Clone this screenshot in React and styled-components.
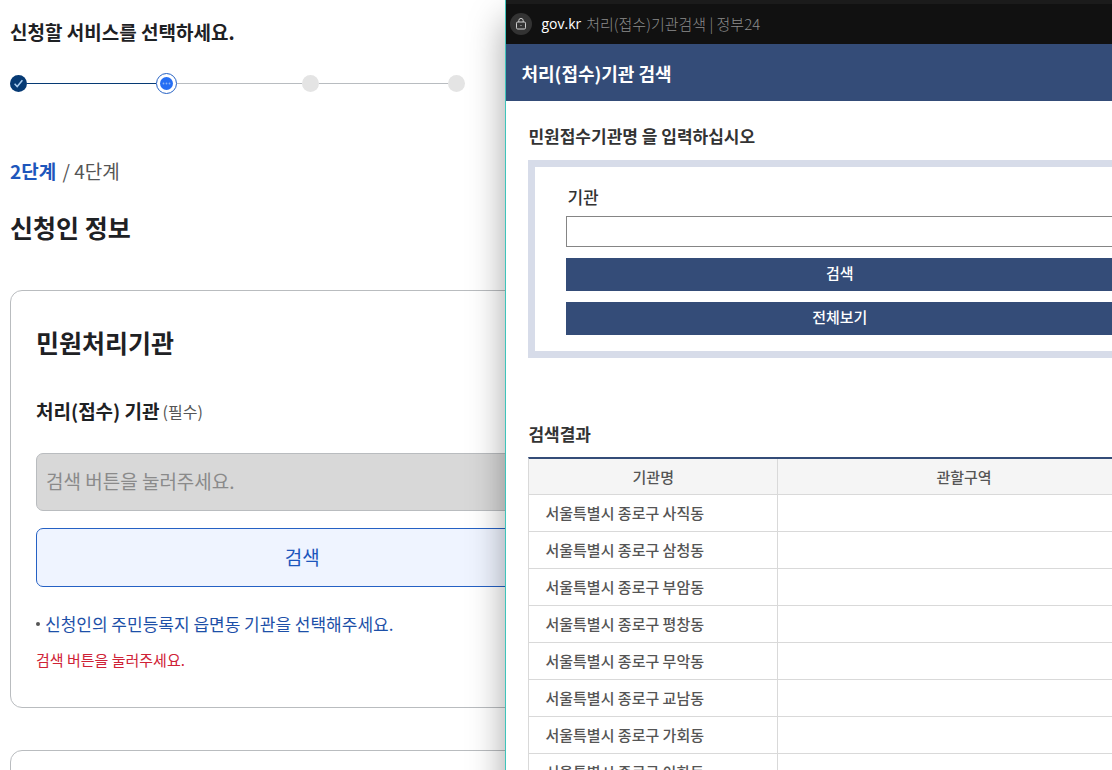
import React from "react";
import styled, { createGlobalStyle, css } from "styled-components";

const GlobalStyle = createGlobalStyle`
  *, *::before, *::after { box-sizing: border-box; }
  body {
    margin: 0;
    background: #fff;
    color: #1e2124;
    font-family: "Noto Sans CJK KR", "Noto Sans", sans-serif;
  }
  h1, h2, h3, p, ol, ul { margin: 0; padding: 0; }
  ol, ul { list-style: none; }
  button, input { font-family: inherit; }
`;

const Screen = styled.div`
  display: grid;
  grid-template-columns: 5fr 6fr;
  height: 100vh;
  overflow: hidden;
`;

/* Application form behind the popup */

const FormPage = styled.main`
  min-width: 0;
  padding: 18px 0 0 10px;
`;

const FormContent = styled.div`
  width: calc(100% + 89px);
`;

const PageTitle = styled.h1`
  font-size: 19px;
  line-height: 28px;
  font-weight: 700;
`;

const Stepper = styled.ol`
  display: flex;
  margin-top: 27px;
`;

const Step = styled.li`
  flex: 1;
  display: flex;
  align-items: center;
  height: 21px;

  &:not(:last-child)::after {
    content: "";
    flex: 1;
    height: 1px;
    background: ${(p) => (p.$done ? "#063a74" : "#b8bcc0")};
  }
`;

const dotStates = {
  done: css`
    width: 17px;
    height: 17px;
    background: #063a74;
  `,
  current: css`
    width: 21px;
    height: 21px;
    background: #fff;
    border: 1px solid #2561c4;
  `,
  waiting: css`
    width: 17px;
    height: 17px;
    background: #e4e4e4;
  `,
};

const StepDot = styled.span`
  display: flex;
  align-items: center;
  justify-content: center;
  border-radius: 50%;
  ${(p) => dotStates[p.$state]}
`;

const StepCount = styled.p`
  margin-top: 63px;
  font-size: 19px;
  line-height: 28px;
  color: #555;

  strong {
    margin-right: 2px;
    font-weight: 700;
    color: #1d56bc;
  }
`;

const SectionTitle = styled.h2`
  margin-top: 24px;
  font-size: 25px;
  line-height: 36px;
  font-weight: 700;
`;

const Card = styled.section`
  margin-top: ${(p) => p.$gap}px;
  min-height: 120px;
  padding: 34px 25px 36px;
  border: 1px solid #b9bcbf;
  border-radius: 12px;
`;

const CardTitle = styled.h3`
  font-size: 25px;
  line-height: 34px;
  font-weight: 700;
`;

const FieldLabel = styled.label`
  display: flex;
  align-items: center;
  gap: 3px;
  margin-top: 38px;
  font-size: 19px;
  line-height: 28px;
  font-weight: 700;

  span {
    font-size: 16px;
    font-weight: 400;
    color: #555;
  }
`;

const AgencyInput = styled.input`
  display: block;
  width: 100%;
  height: 58px;
  margin-top: 28px;
  padding: 0 9px 3px;
  border: 1px solid #b9bcbf;
  border-radius: 7px;
  background: #d8d8d8;
  font-size: 19px;

  &::placeholder {
    color: #8a8a8a;
    opacity: 1;
  }
`;

const OutlineButton = styled.button`
  display: block;
  width: 100%;
  height: 59px;
  margin-top: 17px;
  padding: 0 0 3px;
  border: 1px solid #2561c4;
  border-radius: 7px;
  background: #eff4ff;
  color: #1d56bc;
  font-size: 19px;
`;

const HintList = styled.ul`
  margin-top: 24px;
`;

const Hint = styled.li`
  display: flex;
  align-items: center;
  gap: 5px;
  font-size: 17px;
  line-height: 26px;
  color: #1d50a8;

  &::before {
    content: "";
    width: 4px;
    height: 4px;
    border-radius: 50%;
    background: #555;
  }
`;

const ErrorText = styled.p`
  margin-top: 12px;
  font-size: 15px;
  line-height: 22px;
  color: #cf2236;
`;

/* Popup window */

const Popup = styled.div`
  position: relative;
  z-index: 1;
  min-width: 0;
  border-left: 1px solid #3fc4bb;
  background: #fff;
  box-shadow: 0 20px 34px rgba(0, 0, 0, 0.36);
`;

const AddressBar = styled.header`
  display: flex;
  align-items: center;
  height: 44px;
  padding: 0 4px;
  border-top: 4px solid #1b1b1b;
  background: #111;
  font-size: 15px;
  line-height: 20px;
  white-space: nowrap;
`;

const LockBadge = styled.span`
  display: flex;
  align-items: center;
  justify-content: center;
  width: 22px;
  height: 22px;
  border-radius: 50%;
  background: #333;
`;

const Domain = styled.span`
  margin-left: 9px;
  font-family: "Open Sans", sans-serif;
  font-size: 14px;
  color: #fff;
`;

const TabTitle = styled.span`
  margin-left: 5px;
  font-weight: 300;
  color: #8c8c8c;
`;

const PopupHeader = styled.div`
  display: flex;
  align-items: center;
  height: 57px;
  padding: 0 15px;
  background: #344c78;
  color: #fff;
`;

const PopupTitle = styled.h1`
  font-size: 18px;
  line-height: 28px;
  font-weight: 700;
`;

const PopupBody = styled.div`
  width: calc(100% + 39px);
  padding: 21px 0 0 22px;
`;

const PopupHeading = styled.h2`
  margin-top: ${(p) => p.$gap}px;
  font-size: 17px;
  line-height: 28px;
  font-weight: 700;
  color: #333;
`;

const SearchBox = styled.form`
  display: grid;
  gap: 11px;
  margin-top: 10px;
  padding: 17px 31px 16px;
  border: 7px solid #d7dce9;
`;

const SearchField = styled.div`
  display: grid;
  gap: 6px;
`;

const SearchLabel = styled.label`
  padding-left: 1px;
  font-size: 17px;
  line-height: 26px;
  font-weight: 500;
  color: #333;
`;

const SearchInput = styled.input`
  width: 100%;
  height: 31px;
  padding: 0 8px;
  border: 1px solid #858585;
  border-radius: 0;
  background: #fff;
  font-size: 15px;
`;

const SolidButton = styled.button`
  height: 33px;
  padding: 0 0 3px;
  border: 0;
  background: #344c78;
  color: #fff;
  font-size: 15px;
  line-height: 22px;
  font-weight: 500;
`;

const ResultTable = styled.table`
  width: 100%;
  margin-top: 9px;
  table-layout: fixed;
  border-collapse: separate;
  border-spacing: 0;
  border-top: 2px solid #344c78;
  border-left: 1px solid #d9d9d9;
  font-size: 15px;
  line-height: 22px;
  color: #555;

  th, td {
    border-right: 1px solid #d9d9d9;
    border-bottom: 1px solid #d9d9d9;
    font-weight: 500;
  }

  th {
    height: 36px;
    padding: 0 16px;
    background: #f5f5f5;
    text-align: center;
  }

  th:first-child {
    width: 40%;
  }

  td {
    height: 37px;
    padding: 0 16px 1px;
  }
`;

const CheckIcon = () => (
  <svg width="11" height="11" viewBox="0 0 11 11" fill="none" aria-hidden="true">
    <path d="M1.6 5.8l2.6 2.7L9.4 2.2" stroke="#a9cdf0" strokeWidth="1.5" />
  </svg>
);

const DotsIcon = () => (
  <svg width="13" height="13" viewBox="0 0 13 13" aria-hidden="true">
    <circle cx="6.5" cy="6.5" r="6.5" fill="#256ef4" />
    <g fill="#8db2f5">
      <circle cx="3.5" cy="6.5" r="0.9" />
      <circle cx="6.5" cy="6.5" r="0.9" />
      <circle cx="9.5" cy="6.5" r="0.9" />
    </g>
  </svg>
);

const LockIcon = () => (
  <svg width="12" height="14" viewBox="0 0 12 14" fill="none" stroke="#d0d0d0" aria-hidden="true">
    <rect x="1.5" y="5" width="9" height="7" rx="1.2" />
    <path d="M3.8 5V3.6a2.2 2.2 0 0 1 4.4 0V5" />
    <circle cx="6" cy="8.5" r="0.6" fill="#d0d0d0" stroke="none" />
  </svg>
);

const steps = [
  { state: "done", icon: <CheckIcon /> },
  { state: "current", icon: <DotsIcon /> },
  { state: "waiting" },
  { state: "waiting" },
];

const agencies = ["사직동", "삼청동", "부암동", "평창동", "무악동", "교남동", "가회동", "이화동"];

export default function App() {
  return (
    <>
      <GlobalStyle />
      <Screen>
        <FormPage>
          <FormContent>
            <PageTitle>신청할 서비스를 선택하세요.</PageTitle>
            <Stepper>
              {steps.map((step, i) => (
                <Step key={i} $done={step.state === "done"}>
                  <StepDot $state={step.state}>{step.icon}</StepDot>
                </Step>
              ))}
            </Stepper>
            <StepCount>
              <strong>2단계</strong> / 4단계
            </StepCount>
            <SectionTitle>신청인 정보</SectionTitle>
            <Card $gap={45}>
              <CardTitle>민원처리기관</CardTitle>
              <FieldLabel htmlFor="agency">
                처리(접수) 기관<span>(필수)</span>
              </FieldLabel>
              <AgencyInput id="agency" type="text" placeholder="검색 버튼을 눌러주세요." disabled />
              <OutlineButton type="button">검색</OutlineButton>
              <HintList>
                <Hint>신청인의 주민등록지 읍면동 기관을 선택해주세요.</Hint>
              </HintList>
              <ErrorText>검색 버튼을 눌러주세요.</ErrorText>
            </Card>
            <Card $gap={42} />
          </FormContent>
        </FormPage>

        <Popup>
          <AddressBar>
            <LockBadge>
              <LockIcon />
            </LockBadge>
            <Domain>gov.kr</Domain>
            <TabTitle>처리(접수)기관검색 | 정부24</TabTitle>
          </AddressBar>
          <PopupHeader>
            <PopupTitle>처리(접수)기관 검색</PopupTitle>
          </PopupHeader>
          <PopupBody>
            <PopupHeading $gap={0}>민원접수기관명 을 입력하십시오</PopupHeading>
            <SearchBox>
              <SearchField>
                <SearchLabel htmlFor="keyword">기관</SearchLabel>
                <SearchInput id="keyword" type="text" />
              </SearchField>
              <SolidButton type="button">검색</SolidButton>
              <SolidButton type="button">전체보기</SolidButton>
            </SearchBox>
            <PopupHeading $gap={62}>검색결과</PopupHeading>
            <ResultTable>
              <thead>
                <tr>
                  <th scope="col">기관명</th>
                  <th scope="col">관할구역</th>
                </tr>
              </thead>
              <tbody>
                {agencies.map((name) => (
                  <tr key={name}>
                    <td>서울특별시 종로구 {name}</td>
                    <td />
                  </tr>
                ))}
              </tbody>
            </ResultTable>
          </PopupBody>
        </Popup>
      </Screen>
    </>
  );
}
